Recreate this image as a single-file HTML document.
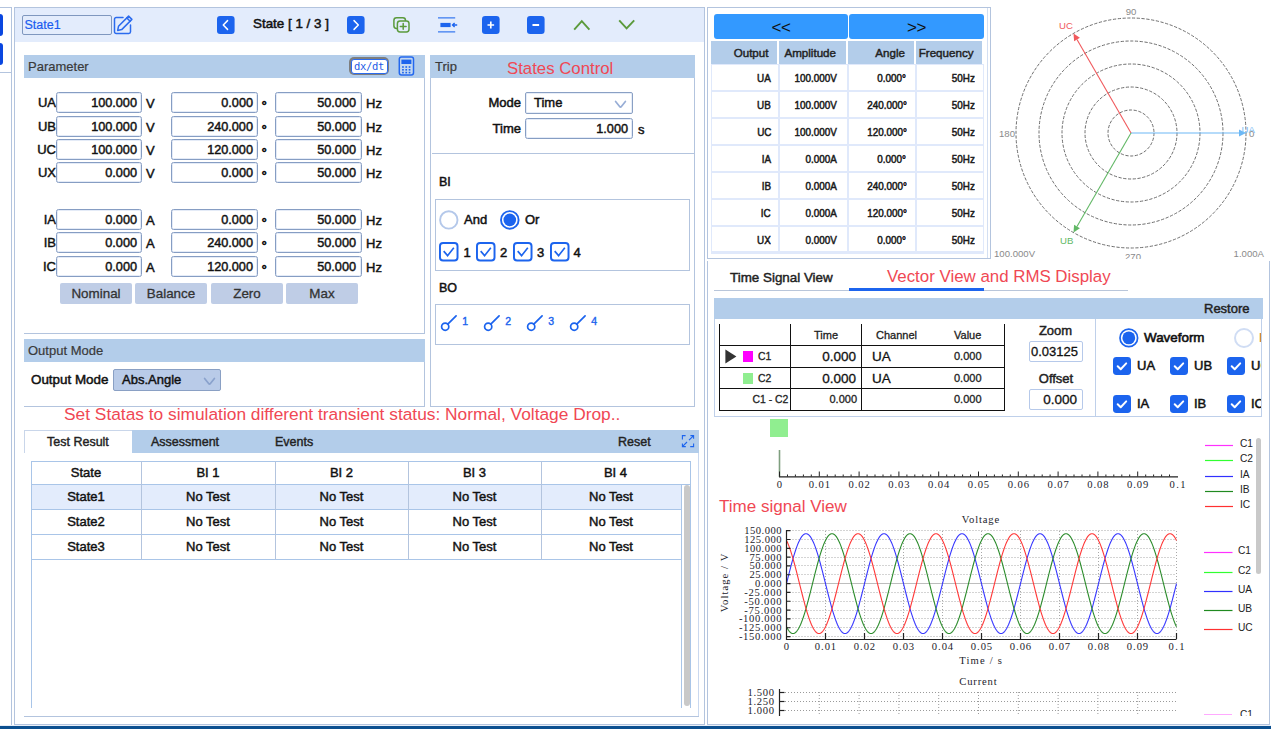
<!DOCTYPE html>
<html lang="en"><head><meta charset="utf-8"><title>State Sequence</title>
<style>
html,body{margin:0;padding:0;}
body{width:1271px;height:729px;position:relative;overflow:hidden;background:#fff;
 font-family:"Liberation Sans",sans-serif;font-size:13px;color:#1b1b1b;}
body div{position:absolute;box-sizing:border-box;white-space:nowrap;}
body svg{position:absolute;overflow:visible;}
.t{-webkit-text-stroke:0.35px currentColor;}
.b{font-weight:bold;}
.in{background:#fff;border:1px solid #869dc3;border-radius:2.5px;text-align:right;padding-right:4px;font-size:12.7px;color:#111;-webkit-text-stroke:0.45px currentColor;box-shadow:inset 0 0 0 1px #e4ebf7;}
.btn{background:#bfcde6;border-radius:2px;text-align:center;color:#333;font-size:13.4px;-webkit-text-stroke:0.3px currentColor;}
.hdr{background:#b3cdea;color:#3a3a3a;padding-left:4px;-webkit-text-stroke:0.2px currentColor;}
.red{color:#f04854;}
.mono{font-family:"Liberation Mono",monospace;font-size:8.9px;color:#222;}
.lg{font-family:"Liberation Sans",sans-serif;font-size:11px;color:#222;}
.pl{font-family:"Liberation Sans",sans-serif;font-size:9.6px;color:#8a8a8a;}
.cell{background:#fff;text-align:right;font-size:10.7px;color:#1a1a1a;-webkit-text-stroke:0.5px currentColor;border:1px solid #e0e9fb;}
.nx{display:inline-block;transform:scaleX(.925);transform-origin:100% 50%;}
.th{background:#b3cdea;text-align:right;font-size:11.8px;color:#222;-webkit-text-stroke:0.45px currentColor;}
.tc{text-align:center;-webkit-text-stroke:0.45px currentColor;color:#111;}

</style></head>
<body>
<!-- sidebar -->
<div style="left:0px;top:7px;width:12px;height:1px;background:#b3c4de"></div>
<div style="left:11px;top:7px;width:1px;height:718px;background:#b3c4de"></div>
<div style="left:0px;top:14px;width:3px;height:22px;background:#0a47e0;border-radius:0 3px 3px 0;"></div>
<div style="left:0px;top:43px;width:3px;height:22px;background:#0a47e0;border-radius:0 3px 3px 0;"></div>
<div style="left:0px;top:72px;width:11px;height:1px;background:#b3c4de"></div>
<!-- left panel -->
<div style="left:14px;top:7px;width:691px;height:718px;border:1px solid #b3c4de;"></div>
<div style="left:15px;top:8px;width:689px;height:34px;background:#e3ecfc;"></div>
<div style="left:22px;top:15px;width:90px;height:20px;border:1px solid #7f97bf;border-radius:2px;background:#e3ecfc;color:#1a5cf0;line-height:18px;padding-left:1.5px;font-size:12.5px;-webkit-text-stroke:0.2px currentColor;">State1</div>
<svg style="left:112px;top:13px" width="24" height="24" viewBox="0 0 24 24" fill="none" stroke="#2b6bee" stroke-width="1.5" stroke-linejoin="round" stroke-linecap="round"><path d="M11 4.5H4.2a1.7 1.7 0 0 0-1.7 1.7v12.6a1.7 1.7 0 0 0 1.7 1.7h12.6a1.7 1.7 0 0 0 1.7-1.7V12"/><path d="M16.6 3.1l3.3 3.3L9.7 16.6l-4 .8.8-4.1z"/><path d="M14.8 4.9l3.3 3.3"/></svg>
<svg style="left:217.4px;top:16px" width="17.6" height="18" viewBox="0 0 18 18" preserveAspectRatio="none"><rect width="18" height="18" rx="3.2" fill="#1c64ee"/><path d="M10.8 4.6L6.4 9l4.4 4.4" fill="none" stroke="#fff" stroke-width="1.5" stroke-linecap="round" stroke-linejoin="round"/></svg>
<div class="t" style="left:253px;top:14px;height:20px;line-height:20px;color:#111;font-size:13.4px;-webkit-text-stroke:0.5px currentColor;">State [ 1 / 3 ]</div>
<svg style="left:347.4px;top:16px" width="17.6" height="18" viewBox="0 0 18 18" preserveAspectRatio="none"><rect width="18" height="18" rx="3.2" fill="#1c64ee"/><path d="M7.2 4.6L11.6 9l-4.4 4.4" fill="none" stroke="#fff" stroke-width="1.5" stroke-linecap="round" stroke-linejoin="round"/></svg>
<svg style="left:392px;top:16px" width="20" height="18" viewBox="0 0 20 18" fill="none" stroke="#5b9a3c" stroke-width="1.5"><rect x="1.9" y="1.8" width="11.6" height="10.6" rx="2.6"/><rect x="5.4" y="4.9" width="11.6" height="11" rx="2.6" fill="#e3ecfc"/><path d="M11.2 7.5v5.8M8.3 10.4h5.8" stroke-linecap="round"/></svg>
<svg style="left:437px;top:16px" width="22" height="18" viewBox="0 0 22 18" fill="none" stroke="#3a7af0" stroke-width="1.3"><path d="M1 1.8h17.2M1 15.8h17.2"/><rect x="3.4" y="6.9" width="10.2" height="4.2" fill="#1c64ee" stroke="none"/><path d="M20.2 9h-4.6M17.6 6.9L15.5 9l2.1 2.1" stroke="#1c64ee" stroke-width="1.4"/></svg>
<svg style="left:482.4px;top:16px" width="17.6" height="18" viewBox="0 0 18 18" preserveAspectRatio="none"><rect width="18" height="18" rx="3.2" fill="#1c64ee"/><path d="M9 5.6v6.8M5.6 9h6.8" stroke="#fff" stroke-width="1.7"/></svg>
<svg style="left:527.4px;top:16px" width="17.6" height="18" viewBox="0 0 18 18" preserveAspectRatio="none"><rect width="18" height="18" rx="3.2" fill="#1c64ee"/><path d="M5.6 9h6.8" stroke="#fff" stroke-width="2"/></svg>
<svg style="left:572px;top:17px" width="20" height="16" viewBox="0 0 20 16" fill="none" stroke="#5b9a3c" stroke-width="1.9"><path d="M2.2 12.6L9.8 4.2l7.6 8.4"/></svg>
<svg style="left:617px;top:17px" width="20" height="16" viewBox="0 0 20 16" fill="none" stroke="#5b9a3c" stroke-width="1.9"><path d="M2.2 3.4l7.4 8 7.6-8"/></svg>
<!-- parameter -->
<div class="hdr" style="left:24px;top:55px;width:401px;height:23px;line-height:23px;">Parameter</div>
<div style="left:424px;top:78px;width:1px;height:256px;background:#b3c4de"></div>
<div style="left:24px;top:333px;width:401px;height:1px;background:#b3c4de"></div>
<div style="left:349px;top:57px;width:40px;height:18px;border-radius:5px;background:#7e7e7e;"></div>
<div style="left:350.5px;top:58.5px;width:37px;height:15px;border:1.3px solid #2b6bee;border-radius:3px;background:#fff;color:#1c5ce6;font-family:'DejaVu Sans Mono','Liberation Mono',monospace;font-size:10.5px;line-height:13.5px;text-align:center;letter-spacing:-0.3px;">dx/dt</div>
<svg style="left:398px;top:56px" width="17" height="20" viewBox="0 0 17 20"><rect x="1.3" y="1" width="14.2" height="18" rx="2.2" fill="#c2d7f1" stroke="#2468ee" stroke-width="1.5"/><rect x="3.4" y="3.6" width="10" height="4.4" fill="#1c64ee"/><rect x="4.1" y="10.2" width="1.7" height="1.6" fill="#1c64ee"/><rect x="7.4" y="10.2" width="1.7" height="1.6" fill="#1c64ee"/><rect x="10.7" y="10.2" width="1.7" height="1.6" fill="#1c64ee"/><rect x="4.1" y="13.0" width="1.7" height="1.6" fill="#1c64ee"/><rect x="7.4" y="13.0" width="1.7" height="1.6" fill="#1c64ee"/><rect x="10.7" y="13.0" width="1.7" height="1.6" fill="#1c64ee"/><rect x="4.1" y="15.8" width="1.7" height="1.6" fill="#1c64ee"/><rect x="7.4" y="15.8" width="1.7" height="1.6" fill="#1c64ee"/><rect x="10.7" y="15.8" width="1.7" height="1.6" fill="#1c64ee"/></svg>
<div class="t" style="left:24px;top:92px;height:21px;line-height:21px;width:32px;text-align:right;color:#111;-webkit-text-stroke:0.45px currentColor;">UA</div>
<div class="in" style="left:56px;top:92px;width:86px;height:21px;line-height:20.5px;">100.000</div>
<div class="t" style="left:146px;top:93px;height:21px;line-height:21px;color:#111;-webkit-text-stroke:0.45px currentColor;">V</div>
<div class="in" style="left:171px;top:92px;width:87px;height:21px;line-height:20.5px;">0.000</div>
<div class="t" style="left:261.6px;top:94.5px;height:21px;line-height:21px;color:#111;font-size:13.5px;-webkit-text-stroke:0.6px currentColor;">&deg;</div>
<div class="in" style="left:275px;top:92px;width:87px;height:21px;line-height:20.5px;padding-right:5px;">50.000</div>
<div class="t" style="left:366px;top:93px;height:21px;line-height:21px;color:#111;-webkit-text-stroke:0.45px currentColor;">Hz</div>
<div class="t" style="left:24px;top:116px;height:21px;line-height:21px;width:32px;text-align:right;color:#111;-webkit-text-stroke:0.45px currentColor;">UB</div>
<div class="in" style="left:56px;top:116px;width:86px;height:21px;line-height:20.5px;">100.000</div>
<div class="t" style="left:146px;top:117px;height:21px;line-height:21px;color:#111;-webkit-text-stroke:0.45px currentColor;">V</div>
<div class="in" style="left:171px;top:116px;width:87px;height:21px;line-height:20.5px;">240.000</div>
<div class="t" style="left:261.6px;top:118.5px;height:21px;line-height:21px;color:#111;font-size:13.5px;-webkit-text-stroke:0.6px currentColor;">&deg;</div>
<div class="in" style="left:275px;top:116px;width:87px;height:21px;line-height:20.5px;padding-right:5px;">50.000</div>
<div class="t" style="left:366px;top:117px;height:21px;line-height:21px;color:#111;-webkit-text-stroke:0.45px currentColor;">Hz</div>
<div class="t" style="left:24px;top:139px;height:21px;line-height:21px;width:32px;text-align:right;color:#111;-webkit-text-stroke:0.45px currentColor;">UC</div>
<div class="in" style="left:56px;top:139px;width:86px;height:21px;line-height:20.5px;">100.000</div>
<div class="t" style="left:146px;top:140px;height:21px;line-height:21px;color:#111;-webkit-text-stroke:0.45px currentColor;">V</div>
<div class="in" style="left:171px;top:139px;width:87px;height:21px;line-height:20.5px;">120.000</div>
<div class="t" style="left:261.6px;top:141.5px;height:21px;line-height:21px;color:#111;font-size:13.5px;-webkit-text-stroke:0.6px currentColor;">&deg;</div>
<div class="in" style="left:275px;top:139px;width:87px;height:21px;line-height:20.5px;padding-right:5px;">50.000</div>
<div class="t" style="left:366px;top:140px;height:21px;line-height:21px;color:#111;-webkit-text-stroke:0.45px currentColor;">Hz</div>
<div class="t" style="left:24px;top:162px;height:21px;line-height:21px;width:32px;text-align:right;color:#111;-webkit-text-stroke:0.45px currentColor;">UX</div>
<div class="in" style="left:56px;top:162px;width:86px;height:21px;line-height:20.5px;">0.000</div>
<div class="t" style="left:146px;top:163px;height:21px;line-height:21px;color:#111;-webkit-text-stroke:0.45px currentColor;">V</div>
<div class="in" style="left:171px;top:162px;width:87px;height:21px;line-height:20.5px;">0.000</div>
<div class="t" style="left:261.6px;top:164.5px;height:21px;line-height:21px;color:#111;font-size:13.5px;-webkit-text-stroke:0.6px currentColor;">&deg;</div>
<div class="in" style="left:275px;top:162px;width:87px;height:21px;line-height:20.5px;padding-right:5px;">50.000</div>
<div class="t" style="left:366px;top:163px;height:21px;line-height:21px;color:#111;-webkit-text-stroke:0.45px currentColor;">Hz</div>
<div class="t" style="left:24px;top:209px;height:21px;line-height:21px;width:32px;text-align:right;color:#111;-webkit-text-stroke:0.45px currentColor;">IA</div>
<div class="in" style="left:56px;top:209px;width:86px;height:21px;line-height:20.5px;">0.000</div>
<div class="t" style="left:146px;top:210px;height:21px;line-height:21px;color:#111;-webkit-text-stroke:0.45px currentColor;">A</div>
<div class="in" style="left:171px;top:209px;width:87px;height:21px;line-height:20.5px;">0.000</div>
<div class="t" style="left:261.6px;top:211.5px;height:21px;line-height:21px;color:#111;font-size:13.5px;-webkit-text-stroke:0.6px currentColor;">&deg;</div>
<div class="in" style="left:275px;top:209px;width:87px;height:21px;line-height:20.5px;padding-right:5px;">50.000</div>
<div class="t" style="left:366px;top:210px;height:21px;line-height:21px;color:#111;-webkit-text-stroke:0.45px currentColor;">Hz</div>
<div class="t" style="left:24px;top:232px;height:21px;line-height:21px;width:32px;text-align:right;color:#111;-webkit-text-stroke:0.45px currentColor;">IB</div>
<div class="in" style="left:56px;top:232px;width:86px;height:21px;line-height:20.5px;">0.000</div>
<div class="t" style="left:146px;top:233px;height:21px;line-height:21px;color:#111;-webkit-text-stroke:0.45px currentColor;">A</div>
<div class="in" style="left:171px;top:232px;width:87px;height:21px;line-height:20.5px;">240.000</div>
<div class="t" style="left:261.6px;top:234.5px;height:21px;line-height:21px;color:#111;font-size:13.5px;-webkit-text-stroke:0.6px currentColor;">&deg;</div>
<div class="in" style="left:275px;top:232px;width:87px;height:21px;line-height:20.5px;padding-right:5px;">50.000</div>
<div class="t" style="left:366px;top:233px;height:21px;line-height:21px;color:#111;-webkit-text-stroke:0.45px currentColor;">Hz</div>
<div class="t" style="left:24px;top:256px;height:21px;line-height:21px;width:32px;text-align:right;color:#111;-webkit-text-stroke:0.45px currentColor;">IC</div>
<div class="in" style="left:56px;top:256px;width:86px;height:21px;line-height:20.5px;">0.000</div>
<div class="t" style="left:146px;top:257px;height:21px;line-height:21px;color:#111;-webkit-text-stroke:0.45px currentColor;">A</div>
<div class="in" style="left:171px;top:256px;width:87px;height:21px;line-height:20.5px;">120.000</div>
<div class="t" style="left:261.6px;top:258.5px;height:21px;line-height:21px;color:#111;font-size:13.5px;-webkit-text-stroke:0.6px currentColor;">&deg;</div>
<div class="in" style="left:275px;top:256px;width:87px;height:21px;line-height:20.5px;padding-right:5px;">50.000</div>
<div class="t" style="left:366px;top:257px;height:21px;line-height:21px;color:#111;-webkit-text-stroke:0.45px currentColor;">Hz</div>
<div class="btn" style="left:60px;top:283px;width:72px;height:21px;line-height:21px;">Nominal</div>
<div class="btn" style="left:135px;top:283px;width:72px;height:21px;line-height:21px;">Balance</div>
<div class="btn" style="left:211px;top:283px;width:72px;height:21px;line-height:21px;">Zero</div>
<div class="btn" style="left:286px;top:283px;width:72px;height:21px;line-height:21px;">Max</div>
<!-- output mode -->
<div class="hdr" style="left:24px;top:339px;width:401px;height:23px;line-height:23px;">Output Mode</div>
<div style="left:424px;top:362px;width:1px;height:45px;background:#b3c4de"></div>
<div style="left:24px;top:406px;width:401px;height:1px;background:#b3c4de"></div>
<div class="t" style="left:31px;top:370px;height:20px;line-height:20px;color:#111;font-size:13.4px;-webkit-text-stroke:0.5px currentColor;">Output Mode</div>
<div style="left:113px;top:369px;width:108px;height:22px;border:1px solid #8aa0c4;border-radius:2px;background:#b9cbe8;line-height:20px;padding-left:8px;color:#111;-webkit-text-stroke:0.45px currentColor;">Abs.Angle</div>
<svg style="left:203px;top:377px" width="13" height="9" viewBox="0 0 13 9" fill="none" stroke="#8aa2cc" stroke-width="1.7" stroke-linecap="round" stroke-linejoin="round"><path d="M1.6 1.4L5.6 6.6Q6.5 7.4 7.4 6.6L11.4 1.4"/></svg>
<!-- trip -->
<div class="hdr" style="left:430px;top:55px;width:265px;height:23px;line-height:23px;padding-left:5px;">Trip</div>
<div class="red" style="left:507px;top:57px;height:23px;line-height:23px;font-size:16.8px;">States Control</div>
<div style="left:430px;top:78px;width:1px;height:328px;background:#b3c4de"></div>
<div style="left:694px;top:78px;width:1px;height:328px;background:#b3c4de"></div>
<div style="left:430px;top:406px;width:265px;height:1px;background:#b3c4de"></div>
<div class="t" style="left:440px;top:92px;height:21px;line-height:21px;width:81px;text-align:right;color:#111;-webkit-text-stroke:0.5px currentColor;">Mode</div>
<div style="left:525px;top:92px;width:108px;height:22px;border:1px solid #8aa0c4;border-radius:2px;background:#fff;line-height:19px;padding-left:8px;color:#111;-webkit-text-stroke:0.45px currentColor;box-shadow:inset 0 0 0 1px #e6edf8;">Time</div>
<svg style="left:614px;top:100px" width="13" height="9" viewBox="0 0 13 9" fill="none" stroke="#98aed6" stroke-width="1.7" stroke-linecap="round" stroke-linejoin="round"><path d="M1.6 1.4L5.6 6.6Q6.5 7.4 7.4 6.6L11.4 1.4"/></svg>
<div class="t" style="left:440px;top:118px;height:21px;line-height:21px;width:81px;text-align:right;color:#111;-webkit-text-stroke:0.5px currentColor;">Time</div>
<div class="in" style="left:525px;top:118px;width:108px;height:21px;line-height:20.5px;">1.000</div>
<div class="t" style="left:638px;top:119px;height:21px;line-height:21px;color:#111;-webkit-text-stroke:0.45px currentColor;">s</div>
<div style="left:432px;top:153px;width:262px;height:1px;background:#b3c4de"></div>
<div class="t" style="left:439px;top:172px;height:20px;line-height:20px;color:#111;font-size:12.5px;-webkit-text-stroke:0.5px currentColor;">BI</div>
<div style="left:435px;top:199px;width:255px;height:72px;border:1px solid #b3c4de;"></div>
<svg style="left:438px;top:209px" width="22" height="22" viewBox="0 0 22 22"><circle cx="10.8" cy="10.9" r="8.7" fill="#fff" stroke="#b4c8ea" stroke-width="1.9"/></svg>
<div class="t" style="left:464px;top:210px;height:19px;line-height:19px;color:#111;-webkit-text-stroke:0.5px currentColor;">And</div>
<svg style="left:499px;top:209px" width="22" height="22" viewBox="0 0 22 22"><circle cx="10.8" cy="10.9" r="8.8" fill="#fff" stroke="#1c64ee" stroke-width="1.9"/><circle cx="10.8" cy="10.9" r="6.3" fill="#1c64ee"/></svg>
<div class="t" style="left:525px;top:210px;height:19px;line-height:19px;color:#111;-webkit-text-stroke:0.5px currentColor;">Or</div>
<svg style="left:439px;top:241.8px" width="19.5" height="19.5" viewBox="0 0 20 20" fill="none" stroke="#1c64ee"><rect x="1" y="1" width="18" height="18" rx="3.2" fill="#fff" stroke-width="2"/><path d="M4.8 9.4l4 4.6 6.4-8" stroke-width="1.7"/></svg>
<div class="t" style="left:463.5px;top:243px;height:19px;line-height:19px;color:#111;-webkit-text-stroke:0.5px currentColor;">1</div>
<svg style="left:475.7px;top:241.8px" width="19.5" height="19.5" viewBox="0 0 20 20" fill="none" stroke="#1c64ee"><rect x="1" y="1" width="18" height="18" rx="3.2" fill="#fff" stroke-width="2"/><path d="M4.8 9.4l4 4.6 6.4-8" stroke-width="1.7"/></svg>
<div class="t" style="left:500px;top:243px;height:19px;line-height:19px;color:#111;-webkit-text-stroke:0.5px currentColor;">2</div>
<svg style="left:512.6px;top:241.8px" width="19.5" height="19.5" viewBox="0 0 20 20" fill="none" stroke="#1c64ee"><rect x="1" y="1" width="18" height="18" rx="3.2" fill="#fff" stroke-width="2"/><path d="M4.8 9.4l4 4.6 6.4-8" stroke-width="1.7"/></svg>
<div class="t" style="left:537px;top:243px;height:19px;line-height:19px;color:#111;-webkit-text-stroke:0.5px currentColor;">3</div>
<svg style="left:549.7px;top:241.8px" width="19.5" height="19.5" viewBox="0 0 20 20" fill="none" stroke="#1c64ee"><rect x="1" y="1" width="18" height="18" rx="3.2" fill="#fff" stroke-width="2"/><path d="M4.8 9.4l4 4.6 6.4-8" stroke-width="1.7"/></svg>
<div class="t" style="left:573.5px;top:243px;height:19px;line-height:19px;color:#111;-webkit-text-stroke:0.5px currentColor;">4</div>
<div class="t" style="left:439px;top:278px;height:20px;line-height:20px;color:#111;font-size:12.5px;-webkit-text-stroke:0.5px currentColor;">BO</div>
<div style="left:435px;top:304px;width:255px;height:41px;border:1px solid #b3c4de;"></div>
<svg style="left:440.0px;top:313px" width="30" height="20" viewBox="0 0 30 20" fill="none" stroke="#1c64ee" stroke-width="1.7"><circle cx="5.2" cy="13.7" r="3.6"/><path d="M7.8 11.1L16.1 2.8" stroke-linecap="round"/><text x="22.2" y="12.2" font-family="Liberation Sans, sans-serif" font-size="10.5" fill="#1c64ee" stroke="#1c64ee" stroke-width="0.4">1</text></svg>
<svg style="left:483.1px;top:313px" width="30" height="20" viewBox="0 0 30 20" fill="none" stroke="#1c64ee" stroke-width="1.7"><circle cx="5.2" cy="13.7" r="3.6"/><path d="M7.8 11.1L16.1 2.8" stroke-linecap="round"/><text x="22.2" y="12.2" font-family="Liberation Sans, sans-serif" font-size="10.5" fill="#1c64ee" stroke="#1c64ee" stroke-width="0.4">2</text></svg>
<svg style="left:526.1px;top:313px" width="30" height="20" viewBox="0 0 30 20" fill="none" stroke="#1c64ee" stroke-width="1.7"><circle cx="5.2" cy="13.7" r="3.6"/><path d="M7.8 11.1L16.1 2.8" stroke-linecap="round"/><text x="22.2" y="12.2" font-family="Liberation Sans, sans-serif" font-size="10.5" fill="#1c64ee" stroke="#1c64ee" stroke-width="0.4">3</text></svg>
<svg style="left:569.2px;top:313px" width="30" height="20" viewBox="0 0 30 20" fill="none" stroke="#1c64ee" stroke-width="1.7"><circle cx="5.2" cy="13.7" r="3.6"/><path d="M7.8 11.1L16.1 2.8" stroke-linecap="round"/><text x="22.2" y="12.2" font-family="Liberation Sans, sans-serif" font-size="10.5" fill="#1c64ee" stroke="#1c64ee" stroke-width="0.4">4</text></svg>
<div class="red" style="left:64px;top:403px;height:22px;line-height:22px;font-size:17.34px;">Set Statas to simulation different transient status: Normal, Voltage Drop..</div>
<!-- results -->
<div style="left:24px;top:430px;width:675px;height:23px;background:#b3cdea;"></div>
<div style="left:24px;top:430px;width:108px;height:23px;background:#fff;border-left:1px solid #c9d6ea;border-top:1px solid #c9d6ea;"></div>
<div style="left:698px;top:453px;width:1px;height:264px;background:#c9d8ef"></div>
<div class="t" style="left:47px;top:432px;height:21px;line-height:21px;color:#222;font-size:12.5px;-webkit-text-stroke:0.4px currentColor;">Test Result</div>
<div class="t" style="left:151px;top:432px;height:21px;line-height:21px;color:#222;font-size:12.5px;-webkit-text-stroke:0.4px currentColor;">Assessment</div>
<div class="t" style="left:275px;top:432px;height:21px;line-height:21px;color:#222;font-size:12.5px;-webkit-text-stroke:0.4px currentColor;">Events</div>
<div class="t" style="left:618px;top:432px;height:21px;line-height:21px;color:#222;font-size:12.5px;-webkit-text-stroke:0.4px currentColor;">Reset</div>
<svg style="left:681px;top:434px" width="14" height="14" viewBox="0 0 14 14" fill="none" stroke="#1c64ee" stroke-width="1.1"><path d="M1.4 5.4V1.6h3.2M9.2 12.6h3.4V9.4"/><path d="M8 6.2l4.4-4.4M9.4 1.6h3.2v3.2"/><path d="M6 8l-4.4 4.4M4.8 12.6H1.4V9.4"/></svg>
<div style="left:32px;top:485px;width:649px;height:24px;background:#e3ecfc;"></div>
<div style="left:31px;top:461px;width:1px;height:247px;background:#a9c5e8"></div>
<div style="left:690px;top:461px;width:1px;height:247px;background:#a9c5e8"></div>
<div style="left:681px;top:484px;width:1px;height:224px;background:#a9c5e8"></div>
<div style="left:31px;top:461px;width:660px;height:1px;background:#a9c5e8"></div>
<div style="left:31px;top:484px;width:660px;height:1px;background:#a9c5e8"></div>
<div style="left:31px;top:509px;width:651px;height:1px;background:#a9c5e8"></div>
<div style="left:31px;top:534px;width:651px;height:1px;background:#a9c5e8"></div>
<div style="left:31px;top:559px;width:651px;height:1px;background:#a9c5e8"></div>
<div style="left:141px;top:461px;width:1px;height:99px;background:#b3c4de"></div>
<div style="left:275px;top:461px;width:1px;height:99px;background:#b3c4de"></div>
<div style="left:408px;top:461px;width:1px;height:99px;background:#b3c4de"></div>
<div style="left:541px;top:461px;width:1px;height:99px;background:#b3c4de"></div>
<div class="tc" style="left:31px;top:461px;height:23px;line-height:23px;width:110px;">State</div>
<div class="tc" style="left:141px;top:461px;height:23px;line-height:23px;width:134px;">BI 1</div>
<div class="tc" style="left:275px;top:461px;height:23px;line-height:23px;width:133px;">BI 2</div>
<div class="tc" style="left:408px;top:461px;height:23px;line-height:23px;width:133px;">BI 3</div>
<div class="tc" style="left:541px;top:461px;height:23px;line-height:23px;width:149px;">BI 4</div>
<div class="tc" style="left:31px;top:484px;height:25px;line-height:25px;width:110px;">State1</div>
<div class="tc" style="left:141px;top:484px;height:25px;line-height:25px;width:134px;">No Test</div>
<div class="tc" style="left:275px;top:484px;height:25px;line-height:25px;width:133px;">No Test</div>
<div class="tc" style="left:408px;top:484px;height:25px;line-height:25px;width:133px;">No Test</div>
<div class="tc" style="left:541px;top:484px;height:25px;line-height:25px;width:140px;">No Test</div>
<div class="tc" style="left:31px;top:509px;height:25px;line-height:25px;width:110px;">State2</div>
<div class="tc" style="left:141px;top:509px;height:25px;line-height:25px;width:134px;">No Test</div>
<div class="tc" style="left:275px;top:509px;height:25px;line-height:25px;width:133px;">No Test</div>
<div class="tc" style="left:408px;top:509px;height:25px;line-height:25px;width:133px;">No Test</div>
<div class="tc" style="left:541px;top:509px;height:25px;line-height:25px;width:140px;">No Test</div>
<div class="tc" style="left:31px;top:534px;height:25px;line-height:25px;width:110px;">State3</div>
<div class="tc" style="left:141px;top:534px;height:25px;line-height:25px;width:134px;">No Test</div>
<div class="tc" style="left:275px;top:534px;height:25px;line-height:25px;width:133px;">No Test</div>
<div class="tc" style="left:408px;top:534px;height:25px;line-height:25px;width:133px;">No Test</div>
<div class="tc" style="left:541px;top:534px;height:25px;line-height:25px;width:140px;">No Test</div>
<div style="left:684px;top:485px;width:6px;height:221px;background:#c9c9c9;border-radius:3px;"></div>
<div style="left:24px;top:716px;width:675px;height:1px;background:#b3c4de"></div>
<div style="left:0px;top:725px;width:1271px;height:1px;background:#e8eef8;"></div>
<div style="left:0px;top:726px;width:1271px;height:3px;background:#0b4f8f;"></div>
<!-- rms table -->
<div style="left:707px;top:7px;width:284px;height:252px;border:1px solid #b3c4de;"></div>
<div style="left:987px;top:8px;width:1px;height:250px;background:#d3dff2"></div>
<div style="left:714px;top:14px;width:134px;height:25px;background:#3399ff;border-radius:3px;text-align:center;line-height:24px;font-size:17px;color:#111;letter-spacing:-0.5px;line-height:27px;">&lt;&lt;</div>
<div style="left:849px;top:14px;width:135px;height:25px;background:#3399ff;border-radius:3px;text-align:center;line-height:24px;font-size:17px;color:#111;letter-spacing:-0.5px;line-height:27px;">&gt;&gt;</div>
<div class="th" style="left:711px;top:41px;width:66px;height:23px;line-height:23.5px;padding-right:8.5px;font-size:11.6px;">Output</div>
<div class="th" style="left:779px;top:41px;width:67px;height:23px;line-height:23.5px;padding-right:10px;font-size:11.6px;">Amplitude</div>
<div class="th" style="left:848px;top:41px;width:66px;height:23px;line-height:23.5px;padding-right:9px;font-size:11.6px;">Angle</div>
<div class="th" style="left:916px;top:41px;width:66px;height:23px;line-height:23.5px;padding-right:8.5px;font-size:11.6px;">Frequency</div>
<div style="left:711px;top:64px;width:273px;height:190px;background:#e0e9fb;"></div>
<div class="cell" style="left:711px;top:64px;width:68px;height:27px;line-height:26.5px;padding-right:7px;"><span class="nx">UA</span></div>
<div class="cell" style="left:779px;top:64px;width:69px;height:27px;line-height:26.5px;padding-right:10px;"><span class="nx">100.000V</span></div>
<div class="cell" style="left:848px;top:64px;width:68px;height:27px;line-height:26.5px;padding-right:8.5px;"><span class="nx">0.000&deg;</span></div>
<div class="cell" style="left:916px;top:64px;width:68px;height:27px;line-height:26.5px;padding-right:8.5px;"><span class="nx">50Hz</span></div>
<div class="cell" style="left:711px;top:91px;width:68px;height:27px;line-height:26.5px;padding-right:7px;"><span class="nx">UB</span></div>
<div class="cell" style="left:779px;top:91px;width:69px;height:27px;line-height:26.5px;padding-right:10px;"><span class="nx">100.000V</span></div>
<div class="cell" style="left:848px;top:91px;width:68px;height:27px;line-height:26.5px;padding-right:8.5px;"><span class="nx">240.000&deg;</span></div>
<div class="cell" style="left:916px;top:91px;width:68px;height:27px;line-height:26.5px;padding-right:8.5px;"><span class="nx">50Hz</span></div>
<div class="cell" style="left:711px;top:118px;width:68px;height:27px;line-height:26.5px;padding-right:7px;"><span class="nx">UC</span></div>
<div class="cell" style="left:779px;top:118px;width:69px;height:27px;line-height:26.5px;padding-right:10px;"><span class="nx">100.000V</span></div>
<div class="cell" style="left:848px;top:118px;width:68px;height:27px;line-height:26.5px;padding-right:8.5px;"><span class="nx">120.000&deg;</span></div>
<div class="cell" style="left:916px;top:118px;width:68px;height:27px;line-height:26.5px;padding-right:8.5px;"><span class="nx">50Hz</span></div>
<div class="cell" style="left:711px;top:145px;width:68px;height:27px;line-height:26.5px;padding-right:7px;"><span class="nx">IA</span></div>
<div class="cell" style="left:779px;top:145px;width:69px;height:27px;line-height:26.5px;padding-right:10px;"><span class="nx">0.000A</span></div>
<div class="cell" style="left:848px;top:145px;width:68px;height:27px;line-height:26.5px;padding-right:8.5px;"><span class="nx">0.000&deg;</span></div>
<div class="cell" style="left:916px;top:145px;width:68px;height:27px;line-height:26.5px;padding-right:8.5px;"><span class="nx">50Hz</span></div>
<div class="cell" style="left:711px;top:172px;width:68px;height:27px;line-height:26.5px;padding-right:7px;"><span class="nx">IB</span></div>
<div class="cell" style="left:779px;top:172px;width:69px;height:27px;line-height:26.5px;padding-right:10px;"><span class="nx">0.000A</span></div>
<div class="cell" style="left:848px;top:172px;width:68px;height:27px;line-height:26.5px;padding-right:8.5px;"><span class="nx">240.000&deg;</span></div>
<div class="cell" style="left:916px;top:172px;width:68px;height:27px;line-height:26.5px;padding-right:8.5px;"><span class="nx">50Hz</span></div>
<div class="cell" style="left:711px;top:199px;width:68px;height:27px;line-height:26.5px;padding-right:7px;"><span class="nx">IC</span></div>
<div class="cell" style="left:779px;top:199px;width:69px;height:27px;line-height:26.5px;padding-right:10px;"><span class="nx">0.000A</span></div>
<div class="cell" style="left:848px;top:199px;width:68px;height:27px;line-height:26.5px;padding-right:8.5px;"><span class="nx">120.000&deg;</span></div>
<div class="cell" style="left:916px;top:199px;width:68px;height:27px;line-height:26.5px;padding-right:8.5px;"><span class="nx">50Hz</span></div>
<div class="cell" style="left:711px;top:226px;width:68px;height:26px;line-height:26.5px;padding-right:7px;"><span class="nx">UX</span></div>
<div class="cell" style="left:779px;top:226px;width:69px;height:26px;line-height:26.5px;padding-right:10px;"><span class="nx">0.000V</span></div>
<div class="cell" style="left:848px;top:226px;width:68px;height:26px;line-height:26.5px;padding-right:8.5px;"><span class="nx">0.000&deg;</span></div>
<div class="cell" style="left:916px;top:226px;width:68px;height:26px;line-height:26.5px;padding-right:8.5px;"><span class="nx">50Hz</span></div>
<!-- polar -->
<div style="left:991px;top:0;width:280px;height:259px;overflow:hidden"><svg style="left:0;top:0" width="280" height="259" viewBox="0 0 280 259"><circle cx="140" cy="133" r="23" fill="none" stroke="#6e6e6e" stroke-width="1" stroke-dasharray="3.2 1.6"/><circle cx="140" cy="133" r="46" fill="none" stroke="#6e6e6e" stroke-width="1" stroke-dasharray="3.2 1.6"/><circle cx="140" cy="133" r="69" fill="none" stroke="#6e6e6e" stroke-width="1" stroke-dasharray="3.2 1.6"/><circle cx="140" cy="133" r="92" fill="none" stroke="#6e6e6e" stroke-width="1" stroke-dasharray="3.2 1.6"/><circle cx="140" cy="133" r="115" fill="none" stroke="#6e6e6e" stroke-width="1" stroke-dasharray="3.2 1.6"/><line x1="140" y1="133" x2="248.0" y2="133.0" stroke="#6cb8f5" stroke-width="1.1"/><polygon points="255.0,133.0 248.0,136.4 248.0,129.6" fill="#6cb8f5"/><line x1="140" y1="133" x2="86.0" y2="39.5" stroke="#f0595c" stroke-width="1.1"/><polygon points="82.5,33.4 88.9,37.8 83.1,41.2" fill="#f0595c"/><line x1="140" y1="133" x2="86.0" y2="226.5" stroke="#62b866" stroke-width="1.1"/><polygon points="82.5,232.6 83.1,224.8 88.9,228.2" fill="#62b866"/><text x="140" y="14.5" font-family="Liberation Sans, sans-serif" font-size="9.6" fill="#8a8a8a" text-anchor="middle">90</text><text x="24" y="136.5" font-family="Liberation Sans, sans-serif" font-size="9.6" fill="#8a8a8a" text-anchor="end">180</text><text x="258" y="136.5" font-family="Liberation Sans, sans-serif" font-size="9.6" fill="#8a8a8a" text-anchor="start">0</text><text x="142" y="259.5" font-family="Liberation Sans, sans-serif" font-size="9.6" fill="#8a8a8a" text-anchor="middle">270</text><text x="250.5" y="132.5" font-family="Liberation Sans, sans-serif" font-size="9.6" fill="#7fc1f6" text-anchor="start">UA</text><text x="68" y="28.5" font-family="Liberation Sans, sans-serif" font-size="9.6" fill="#f0595c" text-anchor="start">UC</text><text x="69" y="243.5" font-family="Liberation Sans, sans-serif" font-size="9.6" fill="#62b866" text-anchor="start">UB</text><text x="3" y="256.5" font-family="Liberation Sans, sans-serif" font-size="9.6" fill="#8a8a8a" text-anchor="start">100.000V</text><text x="273" y="256.5" font-family="Liberation Sans, sans-serif" font-size="9.6" fill="#8a8a8a" text-anchor="end">1.000A</text></svg></div>
<!-- signal view -->
<div style="left:707px;top:261px;width:1px;height:464px;background:#b3c4de"></div>
<div style="left:1269px;top:261px;width:1px;height:464px;background:#b3c4de"></div>
<div style="left:707px;top:724px;width:563px;height:1px;background:#b3c4de"></div>
<div class="t" style="left:730px;top:267px;height:21px;line-height:21px;color:#222;font-size:13.4px;-webkit-text-stroke:0.45px currentColor;">Time Signal View</div>
<div class="red" style="left:887px;top:265px;height:23px;line-height:23px;font-size:16.87px;">Vector View and RMS Display</div>
<div style="left:714px;top:290px;width:414px;height:1px;background:#b9c6da"></div>
<div style="left:849px;top:288px;width:135px;height:3px;background:#1c64ee;"></div>
<div style="left:714px;top:298px;width:549px;height:21px;background:#b3cdea;"></div>
<div class="t" style="left:1204px;top:298px;height:21px;line-height:21px;color:#222;-webkit-text-stroke:0.45px currentColor;">Restore</div>
<div style="left:714px;top:319px;width:548px;height:98px;border:1px solid #bfd0ea;border-top:none;"></div>
<div style="left:1095px;top:319px;width:1px;height:97px;background:#bfd0ea"></div>
<div style="left:719px;top:324px;width:1px;height:87px;background:#111"></div>
<div style="left:790px;top:324px;width:1px;height:87px;background:#111"></div>
<div style="left:861px;top:324px;width:1px;height:87px;background:#111"></div>
<div style="left:1004px;top:324px;width:1px;height:87px;background:#111"></div>
<div style="left:719px;top:345px;width:286px;height:1px;background:#111"></div>
<div style="left:719px;top:367px;width:286px;height:1px;background:#111"></div>
<div style="left:719px;top:388px;width:286px;height:1px;background:#111"></div>
<div style="left:719px;top:410px;width:286px;height:1px;background:#111"></div>
<div class="t" style="left:814px;top:325px;height:20px;line-height:20px;font-size:11px;color:#222;-webkit-text-stroke:0.3px currentColor;">Time</div>
<div class="t" style="left:876px;top:325px;height:20px;line-height:20px;font-size:11px;color:#222;-webkit-text-stroke:0.3px currentColor;">Channel</div>
<div class="t" style="left:954px;top:325px;height:20px;line-height:20px;font-size:11px;color:#222;-webkit-text-stroke:0.3px currentColor;">Value</div>
<svg style="left:725px;top:349px" width="12" height="15" viewBox="0 0 12 15"><path d="M0.4 0.6L11.4 7.5 0.4 14.4z" fill="#333"/></svg>
<div style="left:743px;top:351px;width:10px;height:11px;background:#ff00ff;"></div>
<div style="left:743px;top:373px;width:10px;height:11px;background:#90ee90;"></div>
<div class="t" style="left:758px;top:346px;height:21px;line-height:21px;font-size:11px;color:#222;-webkit-text-stroke:0.3px currentColor;font-size:10.4px;">C1</div>
<div class="t" style="left:792px;top:346px;height:21px;line-height:21px;width:64px;text-align:right;font-size:13.5px;color:#111;-webkit-text-stroke:0.3px currentColor;">0.000</div>
<div class="t" style="left:872px;top:346px;height:21px;line-height:21px;font-size:13.5px;color:#111;-webkit-text-stroke:0.3px currentColor;">UA</div>
<div class="t" style="left:954px;top:346px;height:21px;line-height:21px;font-size:11px;color:#222;-webkit-text-stroke:0.3px currentColor;">0.000</div>
<div class="t" style="left:758px;top:368px;height:21px;line-height:21px;font-size:11px;color:#222;-webkit-text-stroke:0.3px currentColor;font-size:10.4px;">C2</div>
<div class="t" style="left:792px;top:368px;height:21px;line-height:21px;width:64px;text-align:right;font-size:13.5px;color:#111;-webkit-text-stroke:0.3px currentColor;">0.000</div>
<div class="t" style="left:872px;top:368px;height:21px;line-height:21px;font-size:13.5px;color:#111;-webkit-text-stroke:0.3px currentColor;">UA</div>
<div class="t" style="left:954px;top:368px;height:21px;line-height:21px;font-size:11px;color:#222;-webkit-text-stroke:0.3px currentColor;">0.000</div>
<div class="t" style="left:752.5px;top:389px;height:21px;line-height:21px;font-size:11px;color:#222;-webkit-text-stroke:0.3px currentColor;font-size:10.4px;">C1 - C2</div>
<div class="t" style="left:792px;top:389px;height:21px;line-height:21px;width:65px;text-align:right;font-size:11px;color:#222;-webkit-text-stroke:0.3px currentColor;">0.000</div>
<div class="t" style="left:954px;top:389px;height:21px;line-height:21px;font-size:11px;color:#222;-webkit-text-stroke:0.3px currentColor;">0.000</div>
<div class="t" style="left:1029px;top:321px;height:20px;line-height:20px;width:53px;text-align:center;color:#222;-webkit-text-stroke:0.45px currentColor;">Zoom</div>
<div style="left:1029px;top:341px;width:54px;height:21px;border:1px solid #b6c9ea;border-radius:2px;background:#fff;line-height:19px;text-align:center;padding-right:3px;font-size:13px;color:#111;-webkit-text-stroke:0.3px currentColor;">0.03125</div>
<div class="t" style="left:1029px;top:369px;height:20px;line-height:20px;width:54px;text-align:center;color:#222;-webkit-text-stroke:0.45px currentColor;">Offset</div>
<div style="left:1029px;top:389px;width:54px;height:21px;border:1px solid #b6c9ea;border-radius:2px;background:#fff;line-height:19px;text-align:right;padding-right:5px;font-size:13.5px;color:#111;-webkit-text-stroke:0.3px currentColor;">0.000</div>
<div style="left:1096px;top:319px;width:165px;height:97px;overflow:hidden">
<svg style="left:23px;top:9px" width="20" height="20" viewBox="0 0 20 20"><circle cx="9.8" cy="9.9" r="8.8" fill="#fff" stroke="#1c64ee" stroke-width="1.7"/><circle cx="9.8" cy="9.9" r="6.4" fill="#1c64ee"/></svg>
<div class="" style="left:48px;top:9px;height:20px;line-height:20px;color:#111;font-size:13.4px;-webkit-text-stroke:0.6px currentColor;">Waveform</div>
<div style="left:138px;top:9px;width:20px;height:20px;border:2px solid #d0ddf4;border-radius:50%;background:#fff;"></div>
<div class="" style="left:163px;top:9px;height:20px;line-height:20px;font-weight:bold;color:#c88a3a;font-size:13px;">RMS</div>
<svg style="left:17px;top:38px" width="18" height="18" viewBox="0 0 18 18"><rect width="18" height="18" rx="3.4" fill="#1c64ee"/><path d="M4.7 9.3l3 2.9 5.5-5.8" fill="none" stroke="#fff" stroke-width="2" stroke-linecap="round" stroke-linejoin="round"/></svg>
<div class="t" style="left:41px;top:37px;height:20px;line-height:20px;color:#111;-webkit-text-stroke:0.5px currentColor;">UA</div>
<svg style="left:74px;top:38px" width="18" height="18" viewBox="0 0 18 18"><rect width="18" height="18" rx="3.4" fill="#1c64ee"/><path d="M4.7 9.3l3 2.9 5.5-5.8" fill="none" stroke="#fff" stroke-width="2" stroke-linecap="round" stroke-linejoin="round"/></svg>
<div class="t" style="left:98px;top:37px;height:20px;line-height:20px;color:#111;-webkit-text-stroke:0.5px currentColor;">UB</div>
<svg style="left:131px;top:38px" width="18" height="18" viewBox="0 0 18 18"><rect width="18" height="18" rx="3.4" fill="#1c64ee"/><path d="M4.7 9.3l3 2.9 5.5-5.8" fill="none" stroke="#fff" stroke-width="2" stroke-linecap="round" stroke-linejoin="round"/></svg>
<div class="t" style="left:155px;top:37px;height:20px;line-height:20px;color:#111;-webkit-text-stroke:0.5px currentColor;">UC</div>
<svg style="left:17px;top:76px" width="18" height="18" viewBox="0 0 18 18"><rect width="18" height="18" rx="3.4" fill="#1c64ee"/><path d="M4.7 9.3l3 2.9 5.5-5.8" fill="none" stroke="#fff" stroke-width="2" stroke-linecap="round" stroke-linejoin="round"/></svg>
<div class="t" style="left:41px;top:75px;height:20px;line-height:20px;color:#111;-webkit-text-stroke:0.5px currentColor;">IA</div>
<svg style="left:74px;top:76px" width="18" height="18" viewBox="0 0 18 18"><rect width="18" height="18" rx="3.4" fill="#1c64ee"/><path d="M4.7 9.3l3 2.9 5.5-5.8" fill="none" stroke="#fff" stroke-width="2" stroke-linecap="round" stroke-linejoin="round"/></svg>
<div class="t" style="left:98px;top:75px;height:20px;line-height:20px;color:#111;-webkit-text-stroke:0.5px currentColor;">IB</div>
<svg style="left:131px;top:76px" width="18" height="18" viewBox="0 0 18 18"><rect width="18" height="18" rx="3.4" fill="#1c64ee"/><path d="M4.7 9.3l3 2.9 5.5-5.8" fill="none" stroke="#fff" stroke-width="2" stroke-linecap="round" stroke-linejoin="round"/></svg>
<div class="t" style="left:155px;top:75px;height:20px;line-height:20px;color:#111;-webkit-text-stroke:0.5px currentColor;">IC</div>
</div>
<!-- charts -->
<div style="left:708px;top:417px;width:561px;height:299px;overflow:hidden">
<div style="left:62px;top:2px;width:18px;height:18px;background:#90ee90;"></div>
<div class="red" style="left:11px;top:79px;height:22px;line-height:22px;font-size:17.06px;">Time signal View</div>
<div style="left:548px;top:21px;width:5px;height:136px;background:#c9c9c9;border-radius:3px;"></div>
<svg style="left:0;top:0" width="561" height="320" viewBox="708 417 561 320"><path d="M779.5 450V477" stroke="#7f9f7f" stroke-width="1.6"/><path d="M779 476.8H1178" stroke="#222" stroke-width="1.3"/><path d="M779.5 476.5V471.5M787.5 476.5V474.5M795.4 476.5V474.5M803.4 476.5V474.5M811.3 476.5V474.5M819.3 476.5V471.5M827.3 476.5V474.5M835.2 476.5V474.5M843.2 476.5V474.5M851.1 476.5V474.5M859.1 476.5V471.5M867.1 476.5V474.5M875.0 476.5V474.5M883.0 476.5V474.5M890.9 476.5V474.5M898.9 476.5V471.5M906.9 476.5V474.5M914.8 476.5V474.5M922.8 476.5V474.5M930.7 476.5V474.5M938.7 476.5V471.5M946.7 476.5V474.5M954.6 476.5V474.5M962.6 476.5V474.5M970.5 476.5V474.5M978.5 476.5V471.5M986.5 476.5V474.5M994.4 476.5V474.5M1002.4 476.5V474.5M1010.3 476.5V474.5M1018.3 476.5V471.5M1026.3 476.5V474.5M1034.2 476.5V474.5M1042.2 476.5V474.5M1050.1 476.5V474.5M1058.1 476.5V471.5M1066.1 476.5V474.5M1074.0 476.5V474.5M1082.0 476.5V474.5M1089.9 476.5V474.5M1097.9 476.5V471.5M1105.9 476.5V474.5M1113.8 476.5V474.5M1121.8 476.5V474.5M1129.7 476.5V474.5M1137.7 476.5V471.5M1145.7 476.5V474.5M1153.6 476.5V474.5M1161.6 476.5V474.5M1169.5 476.5V474.5" stroke="#222" stroke-width="1"/><text x="779.5" y="487.8" text-anchor="middle" font-family="Liberation Serif, serif" font-size="10.6" fill="#1c1c2c">0</text><text x="819.3" y="487.8" text-anchor="middle" textLength="21.3" lengthAdjust="spacing" font-family="Liberation Serif, serif" font-size="10.6" fill="#1c1c2c">0.01</text><text x="859.1" y="487.8" text-anchor="middle" textLength="21.3" lengthAdjust="spacing" font-family="Liberation Serif, serif" font-size="10.6" fill="#1c1c2c">0.02</text><text x="898.9" y="487.8" text-anchor="middle" textLength="21.3" lengthAdjust="spacing" font-family="Liberation Serif, serif" font-size="10.6" fill="#1c1c2c">0.03</text><text x="938.7" y="487.8" text-anchor="middle" textLength="21.3" lengthAdjust="spacing" font-family="Liberation Serif, serif" font-size="10.6" fill="#1c1c2c">0.04</text><text x="978.5" y="487.8" text-anchor="middle" textLength="21.3" lengthAdjust="spacing" font-family="Liberation Serif, serif" font-size="10.6" fill="#1c1c2c">0.05</text><text x="1018.3" y="487.8" text-anchor="middle" textLength="21.3" lengthAdjust="spacing" font-family="Liberation Serif, serif" font-size="10.6" fill="#1c1c2c">0.06</text><text x="1058.1" y="487.8" text-anchor="middle" textLength="21.3" lengthAdjust="spacing" font-family="Liberation Serif, serif" font-size="10.6" fill="#1c1c2c">0.07</text><text x="1097.9" y="487.8" text-anchor="middle" textLength="21.3" lengthAdjust="spacing" font-family="Liberation Serif, serif" font-size="10.6" fill="#1c1c2c">0.08</text><text x="1137.7" y="487.8" text-anchor="middle" textLength="21.3" lengthAdjust="spacing" font-family="Liberation Serif, serif" font-size="10.6" fill="#1c1c2c">0.09</text><text x="1177.5" y="487.8" text-anchor="middle" textLength="16.0" lengthAdjust="spacing" font-family="Liberation Serif, serif" font-size="10.6" fill="#1c1c2c">0.1</text><path d="M1205 445.5H1233" stroke="#ff30ff" stroke-width="1.2"/><text x="1240" y="446.6" font-family="Liberation Sans, sans-serif" font-size="10.2" fill="#222">C1</text><path d="M1205 460.5H1233" stroke="#30ff30" stroke-width="1.2"/><text x="1240" y="461.6" font-family="Liberation Sans, sans-serif" font-size="10.2" fill="#222">C2</text><path d="M1205 476.5H1233" stroke="#3030ff" stroke-width="1.2"/><text x="1240" y="477.6" font-family="Liberation Sans, sans-serif" font-size="10.2" fill="#222">IA</text><path d="M1205 491.5H1233" stroke="#208a20" stroke-width="1.2"/><text x="1240" y="492.6" font-family="Liberation Sans, sans-serif" font-size="10.2" fill="#222">IB</text><path d="M1205 506.5H1233" stroke="#ff3030" stroke-width="1.2"/><text x="1240" y="507.6" font-family="Liberation Sans, sans-serif" font-size="10.2" fill="#222">IC</text><path d="M1204 552.5H1232.5" stroke="#ff30ff" stroke-width="1.2"/><text x="1238" y="554.4" font-family="Liberation Sans, sans-serif" font-size="10.2" fill="#222">C1</text><path d="M1204 572.5H1232.5" stroke="#30ff30" stroke-width="1.2"/><text x="1238" y="574.4" font-family="Liberation Sans, sans-serif" font-size="10.2" fill="#222">C2</text><path d="M1204 591.5H1232.5" stroke="#3030ff" stroke-width="1.2"/><text x="1238" y="593.4" font-family="Liberation Sans, sans-serif" font-size="10.2" fill="#222">UA</text><path d="M1204 610.5H1232.5" stroke="#208a20" stroke-width="1.2"/><text x="1238" y="612.4" font-family="Liberation Sans, sans-serif" font-size="10.2" fill="#222">UB</text><path d="M1204 629.5H1232.5" stroke="#ff3030" stroke-width="1.2"/><text x="1238" y="631.4" font-family="Liberation Sans, sans-serif" font-size="10.2" fill="#222">UC</text><path d="M1204 714.5H1232" stroke="#ffaaff" stroke-width="1"/><text x="1240" y="718" font-family="Liberation Sans, sans-serif" font-size="10.2" fill="#222">C1</text><text x="980.5" y="523" text-anchor="middle" textLength="37.3" lengthAdjust="spacing" font-family="Liberation Serif, serif" font-size="10.6" fill="#1c1c2c">Voltage</text><path d="M786.5 530.50H1176.5M786.5 539.50H1176.5M786.5 548.50H1176.5M786.5 557.50H1176.5M786.5 565.50H1176.5M786.5 574.50H1176.5M786.5 592.50H1176.5M786.5 601.50H1176.5M786.5 610.50H1176.5M786.5 618.50H1176.5M786.5 627.50H1176.5M786.5 636.50H1176.5M825.5 531V638M864.5 531V638M903.5 531V638M942.5 531V638M981.5 531V638M1020.5 531V638M1059.5 531V638M1098.5 531V638M1137.5 531V638M1176.5 531V638" stroke="#a8a8a8" stroke-width="1" stroke-dasharray="1 2" fill="none"/><path d="M786.5 583.5H1176.5" stroke="#bdbdbd" stroke-width="1"/><polyline points="786.5,583.6 787.5,579.6 788.5,575.6 789.5,571.7 790.5,567.8 791.5,564.0 792.5,560.4 793.5,556.9 794.5,553.6 795.5,550.5 796.5,547.6 797.5,544.9 798.5,542.5 799.5,540.4 800.5,538.5 801.5,536.9 802.5,535.6 803.5,534.7 804.5,534.0 805.5,533.7 806.5,533.7 807.5,534.0 808.5,534.7 809.5,535.6 810.5,536.9 811.5,538.5 812.5,540.4 813.5,542.5 814.5,544.9 815.5,547.6 816.5,550.5 817.5,553.6 818.5,556.9 819.5,560.4 820.5,564.0 821.5,567.8 822.5,571.7 823.5,575.6 824.5,579.6 825.5,583.6 826.5,587.6 827.5,591.6 828.5,595.5 829.5,599.4 830.5,603.2 831.5,606.8 832.5,610.3 833.5,613.6 834.5,616.7 835.5,619.6 836.5,622.3 837.5,624.7 838.5,626.8 839.5,628.7 840.5,630.3 841.5,631.6 842.5,632.5 843.5,633.2 844.5,633.5 845.5,633.5 846.5,633.2 847.5,632.5 848.5,631.6 849.5,630.3 850.5,628.7 851.5,626.8 852.5,624.7 853.5,622.3 854.5,619.6 855.5,616.7 856.5,613.6 857.5,610.3 858.5,606.8 859.5,603.2 860.5,599.4 861.5,595.5 862.5,591.6 863.5,587.6 864.5,583.6 865.5,579.6 866.5,575.6 867.5,571.7 868.5,567.8 869.5,564.0 870.5,560.4 871.5,556.9 872.5,553.6 873.5,550.5 874.5,547.6 875.5,544.9 876.5,542.5 877.5,540.4 878.5,538.5 879.5,536.9 880.5,535.6 881.5,534.7 882.5,534.0 883.5,533.7 884.5,533.7 885.5,534.0 886.5,534.7 887.5,535.6 888.5,536.9 889.5,538.5 890.5,540.4 891.5,542.5 892.5,544.9 893.5,547.6 894.5,550.5 895.5,553.6 896.5,556.9 897.5,560.4 898.5,564.0 899.5,567.8 900.5,571.7 901.5,575.6 902.5,579.6 903.5,583.6 904.5,587.6 905.5,591.6 906.5,595.5 907.5,599.4 908.5,603.2 909.5,606.8 910.5,610.3 911.5,613.6 912.5,616.7 913.5,619.6 914.5,622.3 915.5,624.7 916.5,626.8 917.5,628.7 918.5,630.3 919.5,631.6 920.5,632.5 921.5,633.2 922.5,633.5 923.5,633.5 924.5,633.2 925.5,632.5 926.5,631.6 927.5,630.3 928.5,628.7 929.5,626.8 930.5,624.7 931.5,622.3 932.5,619.6 933.5,616.7 934.5,613.6 935.5,610.3 936.5,606.8 937.5,603.2 938.5,599.4 939.5,595.5 940.5,591.6 941.5,587.6 942.5,583.6 943.5,579.6 944.5,575.6 945.5,571.7 946.5,567.8 947.5,564.0 948.5,560.4 949.5,556.9 950.5,553.6 951.5,550.5 952.5,547.6 953.5,544.9 954.5,542.5 955.5,540.4 956.5,538.5 957.5,536.9 958.5,535.6 959.5,534.7 960.5,534.0 961.5,533.7 962.5,533.7 963.5,534.0 964.5,534.7 965.5,535.6 966.5,536.9 967.5,538.5 968.5,540.4 969.5,542.5 970.5,544.9 971.5,547.6 972.5,550.5 973.5,553.6 974.5,556.9 975.5,560.4 976.5,564.0 977.5,567.8 978.5,571.7 979.5,575.6 980.5,579.6 981.5,583.6 982.5,587.6 983.5,591.6 984.5,595.5 985.5,599.4 986.5,603.2 987.5,606.8 988.5,610.3 989.5,613.6 990.5,616.7 991.5,619.6 992.5,622.3 993.5,624.7 994.5,626.8 995.5,628.7 996.5,630.3 997.5,631.6 998.5,632.5 999.5,633.2 1000.5,633.5 1001.5,633.5 1002.5,633.2 1003.5,632.5 1004.5,631.6 1005.5,630.3 1006.5,628.7 1007.5,626.8 1008.5,624.7 1009.5,622.3 1010.5,619.6 1011.5,616.7 1012.5,613.6 1013.5,610.3 1014.5,606.8 1015.5,603.2 1016.5,599.4 1017.5,595.5 1018.5,591.6 1019.5,587.6 1020.5,583.6 1021.5,579.6 1022.5,575.6 1023.5,571.7 1024.5,567.8 1025.5,564.0 1026.5,560.4 1027.5,556.9 1028.5,553.6 1029.5,550.5 1030.5,547.6 1031.5,544.9 1032.5,542.5 1033.5,540.4 1034.5,538.5 1035.5,536.9 1036.5,535.6 1037.5,534.7 1038.5,534.0 1039.5,533.7 1040.5,533.7 1041.5,534.0 1042.5,534.7 1043.5,535.6 1044.5,536.9 1045.5,538.5 1046.5,540.4 1047.5,542.5 1048.5,544.9 1049.5,547.6 1050.5,550.5 1051.5,553.6 1052.5,556.9 1053.5,560.4 1054.5,564.0 1055.5,567.8 1056.5,571.7 1057.5,575.6 1058.5,579.6 1059.5,583.6 1060.5,587.6 1061.5,591.6 1062.5,595.5 1063.5,599.4 1064.5,603.2 1065.5,606.8 1066.5,610.3 1067.5,613.6 1068.5,616.7 1069.5,619.6 1070.5,622.3 1071.5,624.7 1072.5,626.8 1073.5,628.7 1074.5,630.3 1075.5,631.6 1076.5,632.5 1077.5,633.2 1078.5,633.5 1079.5,633.5 1080.5,633.2 1081.5,632.5 1082.5,631.6 1083.5,630.3 1084.5,628.7 1085.5,626.8 1086.5,624.7 1087.5,622.3 1088.5,619.6 1089.5,616.7 1090.5,613.6 1091.5,610.3 1092.5,606.8 1093.5,603.2 1094.5,599.4 1095.5,595.5 1096.5,591.6 1097.5,587.6 1098.5,583.6 1099.5,579.6 1100.5,575.6 1101.5,571.7 1102.5,567.8 1103.5,564.0 1104.5,560.4 1105.5,556.9 1106.5,553.6 1107.5,550.5 1108.5,547.6 1109.5,544.9 1110.5,542.5 1111.5,540.4 1112.5,538.5 1113.5,536.9 1114.5,535.6 1115.5,534.7 1116.5,534.0 1117.5,533.7 1118.5,533.7 1119.5,534.0 1120.5,534.7 1121.5,535.6 1122.5,536.9 1123.5,538.5 1124.5,540.4 1125.5,542.5 1126.5,544.9 1127.5,547.6 1128.5,550.5 1129.5,553.6 1130.5,556.9 1131.5,560.4 1132.5,564.0 1133.5,567.8 1134.5,571.7 1135.5,575.6 1136.5,579.6 1137.5,583.6 1138.5,587.6 1139.5,591.6 1140.5,595.5 1141.5,599.4 1142.5,603.2 1143.5,606.8 1144.5,610.3 1145.5,613.6 1146.5,616.7 1147.5,619.6 1148.5,622.3 1149.5,624.7 1150.5,626.8 1151.5,628.7 1152.5,630.3 1153.5,631.6 1154.5,632.5 1155.5,633.2 1156.5,633.5 1157.5,633.5 1158.5,633.2 1159.5,632.5 1160.5,631.6 1161.5,630.3 1162.5,628.7 1163.5,626.8 1164.5,624.7 1165.5,622.3 1166.5,619.6 1167.5,616.7 1168.5,613.6 1169.5,610.3 1170.5,606.8 1171.5,603.2 1172.5,599.4 1173.5,595.5 1174.5,591.6 1175.5,587.6 1176.5,583.6" fill="none" stroke="#3838ff" stroke-width="1.1"/><polyline points="786.5,626.8 787.5,628.7 788.5,630.3 789.5,631.6 790.5,632.5 791.5,633.2 792.5,633.5 793.5,633.5 794.5,633.2 795.5,632.5 796.5,631.6 797.5,630.3 798.5,628.7 799.5,626.8 800.5,624.7 801.5,622.3 802.5,619.6 803.5,616.7 804.5,613.6 805.5,610.3 806.5,606.8 807.5,603.2 808.5,599.4 809.5,595.5 810.5,591.6 811.5,587.6 812.5,583.6 813.5,579.6 814.5,575.6 815.5,571.7 816.5,567.8 817.5,564.0 818.5,560.4 819.5,556.9 820.5,553.6 821.5,550.5 822.5,547.6 823.5,544.9 824.5,542.5 825.5,540.4 826.5,538.5 827.5,536.9 828.5,535.6 829.5,534.7 830.5,534.0 831.5,533.7 832.5,533.7 833.5,534.0 834.5,534.7 835.5,535.6 836.5,536.9 837.5,538.5 838.5,540.4 839.5,542.5 840.5,544.9 841.5,547.6 842.5,550.5 843.5,553.6 844.5,556.9 845.5,560.4 846.5,564.0 847.5,567.8 848.5,571.7 849.5,575.6 850.5,579.6 851.5,583.6 852.5,587.6 853.5,591.6 854.5,595.5 855.5,599.4 856.5,603.2 857.5,606.8 858.5,610.3 859.5,613.6 860.5,616.7 861.5,619.6 862.5,622.3 863.5,624.7 864.5,626.8 865.5,628.7 866.5,630.3 867.5,631.6 868.5,632.5 869.5,633.2 870.5,633.5 871.5,633.5 872.5,633.2 873.5,632.5 874.5,631.6 875.5,630.3 876.5,628.7 877.5,626.8 878.5,624.7 879.5,622.3 880.5,619.6 881.5,616.7 882.5,613.6 883.5,610.3 884.5,606.8 885.5,603.2 886.5,599.4 887.5,595.5 888.5,591.6 889.5,587.6 890.5,583.6 891.5,579.6 892.5,575.6 893.5,571.7 894.5,567.8 895.5,564.0 896.5,560.4 897.5,556.9 898.5,553.6 899.5,550.5 900.5,547.6 901.5,544.9 902.5,542.5 903.5,540.4 904.5,538.5 905.5,536.9 906.5,535.6 907.5,534.7 908.5,534.0 909.5,533.7 910.5,533.7 911.5,534.0 912.5,534.7 913.5,535.6 914.5,536.9 915.5,538.5 916.5,540.4 917.5,542.5 918.5,544.9 919.5,547.6 920.5,550.5 921.5,553.6 922.5,556.9 923.5,560.4 924.5,564.0 925.5,567.8 926.5,571.7 927.5,575.6 928.5,579.6 929.5,583.6 930.5,587.6 931.5,591.6 932.5,595.5 933.5,599.4 934.5,603.2 935.5,606.8 936.5,610.3 937.5,613.6 938.5,616.7 939.5,619.6 940.5,622.3 941.5,624.7 942.5,626.8 943.5,628.7 944.5,630.3 945.5,631.6 946.5,632.5 947.5,633.2 948.5,633.5 949.5,633.5 950.5,633.2 951.5,632.5 952.5,631.6 953.5,630.3 954.5,628.7 955.5,626.8 956.5,624.7 957.5,622.3 958.5,619.6 959.5,616.7 960.5,613.6 961.5,610.3 962.5,606.8 963.5,603.2 964.5,599.4 965.5,595.5 966.5,591.6 967.5,587.6 968.5,583.6 969.5,579.6 970.5,575.6 971.5,571.7 972.5,567.8 973.5,564.0 974.5,560.4 975.5,556.9 976.5,553.6 977.5,550.5 978.5,547.6 979.5,544.9 980.5,542.5 981.5,540.4 982.5,538.5 983.5,536.9 984.5,535.6 985.5,534.7 986.5,534.0 987.5,533.7 988.5,533.7 989.5,534.0 990.5,534.7 991.5,535.6 992.5,536.9 993.5,538.5 994.5,540.4 995.5,542.5 996.5,544.9 997.5,547.6 998.5,550.5 999.5,553.6 1000.5,556.9 1001.5,560.4 1002.5,564.0 1003.5,567.8 1004.5,571.7 1005.5,575.6 1006.5,579.6 1007.5,583.6 1008.5,587.6 1009.5,591.6 1010.5,595.5 1011.5,599.4 1012.5,603.2 1013.5,606.8 1014.5,610.3 1015.5,613.6 1016.5,616.7 1017.5,619.6 1018.5,622.3 1019.5,624.7 1020.5,626.8 1021.5,628.7 1022.5,630.3 1023.5,631.6 1024.5,632.5 1025.5,633.2 1026.5,633.5 1027.5,633.5 1028.5,633.2 1029.5,632.5 1030.5,631.6 1031.5,630.3 1032.5,628.7 1033.5,626.8 1034.5,624.7 1035.5,622.3 1036.5,619.6 1037.5,616.7 1038.5,613.6 1039.5,610.3 1040.5,606.8 1041.5,603.2 1042.5,599.4 1043.5,595.5 1044.5,591.6 1045.5,587.6 1046.5,583.6 1047.5,579.6 1048.5,575.6 1049.5,571.7 1050.5,567.8 1051.5,564.0 1052.5,560.4 1053.5,556.9 1054.5,553.6 1055.5,550.5 1056.5,547.6 1057.5,544.9 1058.5,542.5 1059.5,540.4 1060.5,538.5 1061.5,536.9 1062.5,535.6 1063.5,534.7 1064.5,534.0 1065.5,533.7 1066.5,533.7 1067.5,534.0 1068.5,534.7 1069.5,535.6 1070.5,536.9 1071.5,538.5 1072.5,540.4 1073.5,542.5 1074.5,544.9 1075.5,547.6 1076.5,550.5 1077.5,553.6 1078.5,556.9 1079.5,560.4 1080.5,564.0 1081.5,567.8 1082.5,571.7 1083.5,575.6 1084.5,579.6 1085.5,583.6 1086.5,587.6 1087.5,591.6 1088.5,595.5 1089.5,599.4 1090.5,603.2 1091.5,606.8 1092.5,610.3 1093.5,613.6 1094.5,616.7 1095.5,619.6 1096.5,622.3 1097.5,624.7 1098.5,626.8 1099.5,628.7 1100.5,630.3 1101.5,631.6 1102.5,632.5 1103.5,633.2 1104.5,633.5 1105.5,633.5 1106.5,633.2 1107.5,632.5 1108.5,631.6 1109.5,630.3 1110.5,628.7 1111.5,626.8 1112.5,624.7 1113.5,622.3 1114.5,619.6 1115.5,616.7 1116.5,613.6 1117.5,610.3 1118.5,606.8 1119.5,603.2 1120.5,599.4 1121.5,595.5 1122.5,591.6 1123.5,587.6 1124.5,583.6 1125.5,579.6 1126.5,575.6 1127.5,571.7 1128.5,567.8 1129.5,564.0 1130.5,560.4 1131.5,556.9 1132.5,553.6 1133.5,550.5 1134.5,547.6 1135.5,544.9 1136.5,542.5 1137.5,540.4 1138.5,538.5 1139.5,536.9 1140.5,535.6 1141.5,534.7 1142.5,534.0 1143.5,533.7 1144.5,533.7 1145.5,534.0 1146.5,534.7 1147.5,535.6 1148.5,536.9 1149.5,538.5 1150.5,540.4 1151.5,542.5 1152.5,544.9 1153.5,547.6 1154.5,550.5 1155.5,553.6 1156.5,556.9 1157.5,560.4 1158.5,564.0 1159.5,567.8 1160.5,571.7 1161.5,575.6 1162.5,579.6 1163.5,583.6 1164.5,587.6 1165.5,591.6 1166.5,595.5 1167.5,599.4 1168.5,603.2 1169.5,606.8 1170.5,610.3 1171.5,613.6 1172.5,616.7 1173.5,619.6 1174.5,622.3 1175.5,624.7 1176.5,626.8" fill="none" stroke="#2c8c2c" stroke-width="1.1"/><polyline points="786.5,540.4 787.5,542.5 788.5,544.9 789.5,547.6 790.5,550.5 791.5,553.6 792.5,556.9 793.5,560.4 794.5,564.0 795.5,567.8 796.5,571.7 797.5,575.6 798.5,579.6 799.5,583.6 800.5,587.6 801.5,591.6 802.5,595.5 803.5,599.4 804.5,603.2 805.5,606.8 806.5,610.3 807.5,613.6 808.5,616.7 809.5,619.6 810.5,622.3 811.5,624.7 812.5,626.8 813.5,628.7 814.5,630.3 815.5,631.6 816.5,632.5 817.5,633.2 818.5,633.5 819.5,633.5 820.5,633.2 821.5,632.5 822.5,631.6 823.5,630.3 824.5,628.7 825.5,626.8 826.5,624.7 827.5,622.3 828.5,619.6 829.5,616.7 830.5,613.6 831.5,610.3 832.5,606.8 833.5,603.2 834.5,599.4 835.5,595.5 836.5,591.6 837.5,587.6 838.5,583.6 839.5,579.6 840.5,575.6 841.5,571.7 842.5,567.8 843.5,564.0 844.5,560.4 845.5,556.9 846.5,553.6 847.5,550.5 848.5,547.6 849.5,544.9 850.5,542.5 851.5,540.4 852.5,538.5 853.5,536.9 854.5,535.6 855.5,534.7 856.5,534.0 857.5,533.7 858.5,533.7 859.5,534.0 860.5,534.7 861.5,535.6 862.5,536.9 863.5,538.5 864.5,540.4 865.5,542.5 866.5,544.9 867.5,547.6 868.5,550.5 869.5,553.6 870.5,556.9 871.5,560.4 872.5,564.0 873.5,567.8 874.5,571.7 875.5,575.6 876.5,579.6 877.5,583.6 878.5,587.6 879.5,591.6 880.5,595.5 881.5,599.4 882.5,603.2 883.5,606.8 884.5,610.3 885.5,613.6 886.5,616.7 887.5,619.6 888.5,622.3 889.5,624.7 890.5,626.8 891.5,628.7 892.5,630.3 893.5,631.6 894.5,632.5 895.5,633.2 896.5,633.5 897.5,633.5 898.5,633.2 899.5,632.5 900.5,631.6 901.5,630.3 902.5,628.7 903.5,626.8 904.5,624.7 905.5,622.3 906.5,619.6 907.5,616.7 908.5,613.6 909.5,610.3 910.5,606.8 911.5,603.2 912.5,599.4 913.5,595.5 914.5,591.6 915.5,587.6 916.5,583.6 917.5,579.6 918.5,575.6 919.5,571.7 920.5,567.8 921.5,564.0 922.5,560.4 923.5,556.9 924.5,553.6 925.5,550.5 926.5,547.6 927.5,544.9 928.5,542.5 929.5,540.4 930.5,538.5 931.5,536.9 932.5,535.6 933.5,534.7 934.5,534.0 935.5,533.7 936.5,533.7 937.5,534.0 938.5,534.7 939.5,535.6 940.5,536.9 941.5,538.5 942.5,540.4 943.5,542.5 944.5,544.9 945.5,547.6 946.5,550.5 947.5,553.6 948.5,556.9 949.5,560.4 950.5,564.0 951.5,567.8 952.5,571.7 953.5,575.6 954.5,579.6 955.5,583.6 956.5,587.6 957.5,591.6 958.5,595.5 959.5,599.4 960.5,603.2 961.5,606.8 962.5,610.3 963.5,613.6 964.5,616.7 965.5,619.6 966.5,622.3 967.5,624.7 968.5,626.8 969.5,628.7 970.5,630.3 971.5,631.6 972.5,632.5 973.5,633.2 974.5,633.5 975.5,633.5 976.5,633.2 977.5,632.5 978.5,631.6 979.5,630.3 980.5,628.7 981.5,626.8 982.5,624.7 983.5,622.3 984.5,619.6 985.5,616.7 986.5,613.6 987.5,610.3 988.5,606.8 989.5,603.2 990.5,599.4 991.5,595.5 992.5,591.6 993.5,587.6 994.5,583.6 995.5,579.6 996.5,575.6 997.5,571.7 998.5,567.8 999.5,564.0 1000.5,560.4 1001.5,556.9 1002.5,553.6 1003.5,550.5 1004.5,547.6 1005.5,544.9 1006.5,542.5 1007.5,540.4 1008.5,538.5 1009.5,536.9 1010.5,535.6 1011.5,534.7 1012.5,534.0 1013.5,533.7 1014.5,533.7 1015.5,534.0 1016.5,534.7 1017.5,535.6 1018.5,536.9 1019.5,538.5 1020.5,540.4 1021.5,542.5 1022.5,544.9 1023.5,547.6 1024.5,550.5 1025.5,553.6 1026.5,556.9 1027.5,560.4 1028.5,564.0 1029.5,567.8 1030.5,571.7 1031.5,575.6 1032.5,579.6 1033.5,583.6 1034.5,587.6 1035.5,591.6 1036.5,595.5 1037.5,599.4 1038.5,603.2 1039.5,606.8 1040.5,610.3 1041.5,613.6 1042.5,616.7 1043.5,619.6 1044.5,622.3 1045.5,624.7 1046.5,626.8 1047.5,628.7 1048.5,630.3 1049.5,631.6 1050.5,632.5 1051.5,633.2 1052.5,633.5 1053.5,633.5 1054.5,633.2 1055.5,632.5 1056.5,631.6 1057.5,630.3 1058.5,628.7 1059.5,626.8 1060.5,624.7 1061.5,622.3 1062.5,619.6 1063.5,616.7 1064.5,613.6 1065.5,610.3 1066.5,606.8 1067.5,603.2 1068.5,599.4 1069.5,595.5 1070.5,591.6 1071.5,587.6 1072.5,583.6 1073.5,579.6 1074.5,575.6 1075.5,571.7 1076.5,567.8 1077.5,564.0 1078.5,560.4 1079.5,556.9 1080.5,553.6 1081.5,550.5 1082.5,547.6 1083.5,544.9 1084.5,542.5 1085.5,540.4 1086.5,538.5 1087.5,536.9 1088.5,535.6 1089.5,534.7 1090.5,534.0 1091.5,533.7 1092.5,533.7 1093.5,534.0 1094.5,534.7 1095.5,535.6 1096.5,536.9 1097.5,538.5 1098.5,540.4 1099.5,542.5 1100.5,544.9 1101.5,547.6 1102.5,550.5 1103.5,553.6 1104.5,556.9 1105.5,560.4 1106.5,564.0 1107.5,567.8 1108.5,571.7 1109.5,575.6 1110.5,579.6 1111.5,583.6 1112.5,587.6 1113.5,591.6 1114.5,595.5 1115.5,599.4 1116.5,603.2 1117.5,606.8 1118.5,610.3 1119.5,613.6 1120.5,616.7 1121.5,619.6 1122.5,622.3 1123.5,624.7 1124.5,626.8 1125.5,628.7 1126.5,630.3 1127.5,631.6 1128.5,632.5 1129.5,633.2 1130.5,633.5 1131.5,633.5 1132.5,633.2 1133.5,632.5 1134.5,631.6 1135.5,630.3 1136.5,628.7 1137.5,626.8 1138.5,624.7 1139.5,622.3 1140.5,619.6 1141.5,616.7 1142.5,613.6 1143.5,610.3 1144.5,606.8 1145.5,603.2 1146.5,599.4 1147.5,595.5 1148.5,591.6 1149.5,587.6 1150.5,583.6 1151.5,579.6 1152.5,575.6 1153.5,571.7 1154.5,567.8 1155.5,564.0 1156.5,560.4 1157.5,556.9 1158.5,553.6 1159.5,550.5 1160.5,547.6 1161.5,544.9 1162.5,542.5 1163.5,540.4 1164.5,538.5 1165.5,536.9 1166.5,535.6 1167.5,534.7 1168.5,534.0 1169.5,533.7 1170.5,533.7 1171.5,534.0 1172.5,534.7 1173.5,535.6 1174.5,536.9 1175.5,538.5 1176.5,540.4" fill="none" stroke="#ff3838" stroke-width="1.1"/><path d="M786.5 530V639.5H1176.5" stroke="#222" stroke-width="1.2" fill="none"/><text x="781.5" y="534.0" text-anchor="end" textLength="37.3" lengthAdjust="spacing" font-family="Liberation Serif, serif" font-size="10.6" fill="#1c1c2c">150.000</text><text x="781.5" y="542.9" text-anchor="end" textLength="37.3" lengthAdjust="spacing" font-family="Liberation Serif, serif" font-size="10.6" fill="#1c1c2c">125.000</text><text x="781.5" y="551.7" text-anchor="end" textLength="37.3" lengthAdjust="spacing" font-family="Liberation Serif, serif" font-size="10.6" fill="#1c1c2c">100.000</text><text x="781.5" y="560.5" text-anchor="end" textLength="32.0" lengthAdjust="spacing" font-family="Liberation Serif, serif" font-size="10.6" fill="#1c1c2c">75.000</text><text x="781.5" y="569.4" text-anchor="end" textLength="32.0" lengthAdjust="spacing" font-family="Liberation Serif, serif" font-size="10.6" fill="#1c1c2c">50.000</text><text x="781.5" y="578.2" text-anchor="end" textLength="32.0" lengthAdjust="spacing" font-family="Liberation Serif, serif" font-size="10.6" fill="#1c1c2c">25.000</text><text x="781.5" y="587.0" text-anchor="end" textLength="26.6" lengthAdjust="spacing" font-family="Liberation Serif, serif" font-size="10.6" fill="#1c1c2c">0.000</text><text x="781.5" y="595.8" text-anchor="end" textLength="37.3" lengthAdjust="spacing" font-family="Liberation Serif, serif" font-size="10.6" fill="#1c1c2c">-25.000</text><text x="781.5" y="604.6" text-anchor="end" textLength="37.3" lengthAdjust="spacing" font-family="Liberation Serif, serif" font-size="10.6" fill="#1c1c2c">-50.000</text><text x="781.5" y="613.5" text-anchor="end" textLength="37.3" lengthAdjust="spacing" font-family="Liberation Serif, serif" font-size="10.6" fill="#1c1c2c">-75.000</text><text x="781.5" y="622.3" text-anchor="end" textLength="42.6" lengthAdjust="spacing" font-family="Liberation Serif, serif" font-size="10.6" fill="#1c1c2c">-100.000</text><text x="781.5" y="631.1" text-anchor="end" textLength="42.6" lengthAdjust="spacing" font-family="Liberation Serif, serif" font-size="10.6" fill="#1c1c2c">-125.000</text><text x="781.5" y="640.0" text-anchor="end" textLength="42.6" lengthAdjust="spacing" font-family="Liberation Serif, serif" font-size="10.6" fill="#1c1c2c">-150.000</text><path d="M786.5 530.65h4M786.5 539.48h4M786.5 548.30h4M786.5 557.12h4M786.5 565.95h4M786.5 574.77h4M786.5 583.60h4M786.5 592.43h4M786.5 601.25h4M786.5 610.08h4M786.5 618.90h4M786.5 627.73h4M786.5 636.55h4M825.5 639v-6M864.5 639v-6M903.5 639v-6M942.5 639v-6M981.5 639v-6M1020.5 639v-6M1059.5 639v-6M1098.5 639v-6M1137.5 639v-6M1176.5 639v-6" stroke="#222" stroke-width="1.2"/><text x="786.5" y="650" text-anchor="middle" font-family="Liberation Serif, serif" font-size="10.6" fill="#1c1c2c">0</text><text x="825.5" y="650" text-anchor="middle" textLength="21.3" lengthAdjust="spacing" font-family="Liberation Serif, serif" font-size="10.6" fill="#1c1c2c">0.01</text><text x="864.5" y="650" text-anchor="middle" textLength="21.3" lengthAdjust="spacing" font-family="Liberation Serif, serif" font-size="10.6" fill="#1c1c2c">0.02</text><text x="903.5" y="650" text-anchor="middle" textLength="21.3" lengthAdjust="spacing" font-family="Liberation Serif, serif" font-size="10.6" fill="#1c1c2c">0.03</text><text x="942.5" y="650" text-anchor="middle" textLength="21.3" lengthAdjust="spacing" font-family="Liberation Serif, serif" font-size="10.6" fill="#1c1c2c">0.04</text><text x="981.5" y="650" text-anchor="middle" textLength="21.3" lengthAdjust="spacing" font-family="Liberation Serif, serif" font-size="10.6" fill="#1c1c2c">0.05</text><text x="1020.5" y="650" text-anchor="middle" textLength="21.3" lengthAdjust="spacing" font-family="Liberation Serif, serif" font-size="10.6" fill="#1c1c2c">0.06</text><text x="1059.5" y="650" text-anchor="middle" textLength="21.3" lengthAdjust="spacing" font-family="Liberation Serif, serif" font-size="10.6" fill="#1c1c2c">0.07</text><text x="1098.5" y="650" text-anchor="middle" textLength="21.3" lengthAdjust="spacing" font-family="Liberation Serif, serif" font-size="10.6" fill="#1c1c2c">0.08</text><text x="1137.5" y="650" text-anchor="middle" textLength="21.3" lengthAdjust="spacing" font-family="Liberation Serif, serif" font-size="10.6" fill="#1c1c2c">0.09</text><text x="1176.5" y="650" text-anchor="middle" textLength="16.0" lengthAdjust="spacing" font-family="Liberation Serif, serif" font-size="10.6" fill="#1c1c2c">0.1</text><text x="980.5" y="664" text-anchor="middle" textLength="42.6" lengthAdjust="spacing" font-family="Liberation Serif, serif" font-size="10.6" fill="#1c1c2c">Time / s</text><text transform="translate(728 583) rotate(-90)" text-anchor="middle" textLength="58.6" lengthAdjust="spacing" font-family="Liberation Serif, serif" font-size="10.6" fill="#1c1c2c">Voltage / V</text><text x="978" y="685" text-anchor="middle" textLength="37.3" lengthAdjust="spacing" font-family="Liberation Serif, serif" font-size="10.6" fill="#1c1c2c">Current</text><path d="M779.5 689V730" stroke="#222" stroke-width="1.2"/><text x="774" y="695.9" text-anchor="end" textLength="26.6" lengthAdjust="spacing" font-family="Liberation Serif, serif" font-size="10.6" fill="#1c1c2c">1.500</text><path d="M779.5 692.5h5" stroke="#222" stroke-width="1.2"/><text x="774" y="704.9" text-anchor="end" textLength="26.6" lengthAdjust="spacing" font-family="Liberation Serif, serif" font-size="10.6" fill="#1c1c2c">1.250</text><path d="M779.5 701.5h5" stroke="#222" stroke-width="1.2"/><text x="774" y="713.9" text-anchor="end" textLength="26.6" lengthAdjust="spacing" font-family="Liberation Serif, serif" font-size="10.6" fill="#1c1c2c">1.000</text><path d="M779.5 710.5h5" stroke="#222" stroke-width="1.2"/><path d="M785 692.5H1177M785 701.5H1177M785 710.5H1177M819.3 692V730M859.1 692V730M898.9 692V730M938.7 692V730M978.5 692V730M1018.3 692V730M1058.1 692V730M1097.9 692V730M1137.7 692V730" stroke="#9a9a9a" stroke-width="1" stroke-dasharray="1 2" fill="none"/></svg>
</div>
</body></html>
